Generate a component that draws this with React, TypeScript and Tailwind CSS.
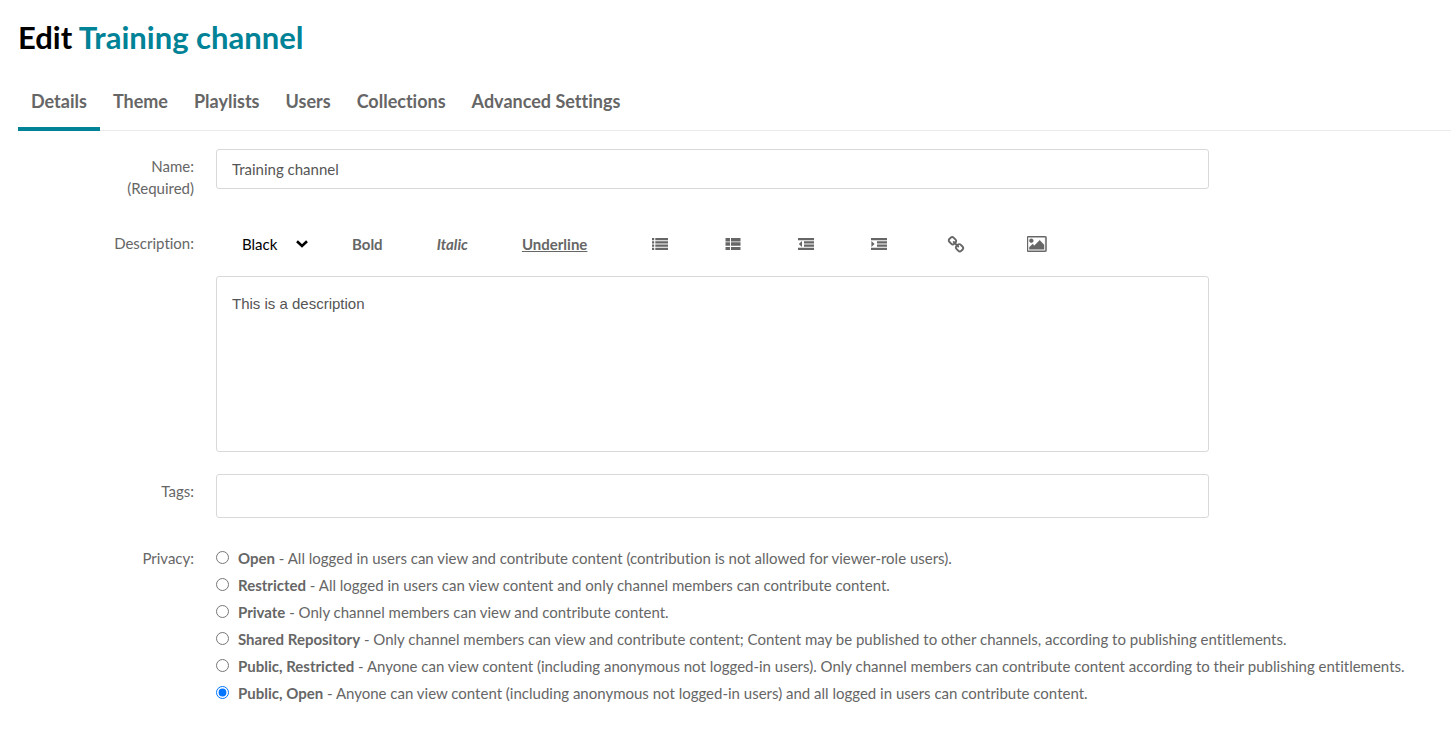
import { useState, type ReactNode } from "react";

const tabs = ["Details", "Theme", "Playlists", "Users", "Collections", "Advanced Settings"];

const privacyOptions = [
  { name: "Open", text: "All logged in users can view and contribute content (contribution is not allowed for viewer-role users)." },
  { name: "Restricted", text: "All logged in users can view content and only channel members can contribute content." },
  { name: "Private", text: "Only channel members can view and contribute content." },
  { name: "Shared Repository", text: "Only channel members can view and contribute content; Content may be published to other channels, according to publishing entitlements." },
  { name: "Public, Restricted", text: "Anyone can view content (including anonymous not logged-in users). Only channel members can contribute content according to their publishing entitlements." },
  { name: "Public, Open", text: "Anyone can view content (including anonymous not logged-in users) and all logged in users can contribute content." },
];

function ListIcon() {
  return (
    <svg viewBox="0 0 16 12" className="h-3 w-4" fill="currentColor" aria-hidden="true">
      <path d="M0 0h2.200v2.300H0zM3.300 0H16v2.300H3.300zM0 3.200h2.200v2.300H0zM3.300 3.200H16v2.300H3.300zM0 6.400h2.200v2.300H0zM3.300 6.400H16v2.300H3.300zM0 9.700h2.200V12H0zM3.300 9.700H16V12H3.300z" />
    </svg>
  );
}

function ThListIcon() {
  return (
    <svg viewBox="0 0 16 12" className="h-3 w-4" fill="currentColor" aria-hidden="true">
      <path d="M.5 0h4.500v3.400H.5zM6 0h9.500v3.400H6zM.5 4.300h4.500v3.400H.5zM6 4.300h9.500v3.400H6zM.5 8.900h4.500V12H.5zM6 8.900h9.500V12H6z" />
    </svg>
  );
}

function OutdentIcon() {
  return (
    <svg viewBox="0 0 16 12" className="h-3 w-4" fill="currentColor" aria-hidden="true">
      <path d="M0 0h16v2.300H0zM6 3.200h10v2.300H6zM6 6.400h10v2.300H6zM0 9.700h16V12H0zM4 3v6L.8 6z" />
    </svg>
  );
}

function IndentIcon() {
  return (
    <svg viewBox="0 0 16 12" className="h-3 w-4" fill="currentColor" aria-hidden="true">
      <path d="M0 0h16v2.300H0zM6 3.200h10v2.300H6zM6 6.400h10v2.300H6zM0 9.700h16V12H0zM.4 3v6l3.200-3z" />
    </svg>
  );
}

function LinkIcon() {
  return (
    <svg viewBox="0 -90 1792 1792" className="size-[18px]" fill="currentColor" aria-hidden="true">
      <path d="M1520 1216q0-40-28-68l-208-208q-28-28-68-28-42 0-72 32 3 3 19 18.500t21.500 21.500 15 19 13 25.500 3.500 27.500q0 40-28 68t-68 28q-15 0-27.500-3.500t-25.500-13-19-15-21.500-21.500-18.500-19q-33 31-33 73 0 40 28 68l206 207q27 27 68 27 40 0 68-26l147-146q28-28 28-67zm-703-705q0-40-28-68l-206-207q-28-28-68-28-39 0-68 27l-147 146q-28 28-28 67 0 40 28 68l208 208q27 27 68 27 42 0 72-31-3-3-19-18.500t-21.500-21.500-15-19-13-25.500-3.500-27.500q0-40 28-68t68-28q15 0 27.500 3.500t25.500 13 19 15 21.500 21.500 18.500 19q33-31 33-73zm895 705q0 120-85 203l-147 146q-83 83-203 83-121 0-204-85l-206-207q-83-83-83-203 0-123 88-209l-88-88q-86 88-208 88-120 0-204-84l-208-208q-84-84-84-204t85-203l147-146q83-83 203-83 121 0 204 85l206 207q83 83 83 203 0 123-88 209l88 88q86-88 208-88 120 0 204 84l208 208q84 84 84 204z" />
    </svg>
  );
}

function ImageIcon() {
  return (
    <svg viewBox="-32 128 1920 1536" className="h-4 w-5" fill="currentColor" stroke="currentColor" strokeWidth="36" aria-hidden="true">
      <path d="M576 576q0 80-56 136t-136 56-136-56-56-136 56-136 136-56 136 56 56 136zm1024 384v448h-1408v-192l320-320 160 160 512-512zm96-704h-1600q-13 0-22.500 9.500t-9.500 22.500v1216q0 13 9.500 22.500t22.500 9.500h1600q13 0 22.500-9.500t9.500-22.500v-1216q0-13-9.500-22.500t-22.500-9.500zm160 32v1216q0 66-47 113t-113 47h-1600q-66 0-113-47t-47-113v-1216q0-66 47-113t113-47h1600q66 0 113 47t47 113z" />
    </svg>
  );
}

const iconButtons = [
  { label: "Bulleted list", width: "w-5", icon: <ListIcon /> },
  { label: "Numbered list", width: "w-5", icon: <ThListIcon /> },
  { label: "Outdent", width: "w-5", icon: <OutdentIcon /> },
  { label: "Indent", width: "w-5", icon: <IndentIcon /> },
  { label: "Insert link", width: "w-7", icon: <LinkIcon /> },
  { label: "Insert image", width: "w-7", icon: <ImageIcon /> },
];

function Row({ label, children }: { label: ReactNode; children: ReactNode }) {
  return (
    <div className="flex gap-[22px]">
      <div className="w-44 shrink-0 text-right">{label}</div>
      <div className="min-w-0 flex-1">{children}</div>
    </div>
  );
}

export default function App() {
  const [tab, setTab] = useState("Details");
  const [privacy, setPrivacy] = useState("Public, Open");
  const [name, setName] = useState("Training channel");
  const [description, setDescription] = useState("This is a description");

  return (
    <main className="min-h-screen bg-white pl-[18px] font-['Lato',sans-serif] text-[15px] leading-[22px] text-[#666] [font-variant-ligatures:none]">
      <h1 className="pt-[17px] text-[31px] leading-10 font-bold text-black">
        Edit <span className="text-[#008297]">Training channel</span>
      </h1>

      <nav className="mt-4 flex border-b border-[#ebebeb]">
        {tabs.map((t) => (
          <a
            key={t}
            href="#"
            onClick={(e) => {
              e.preventDefault();
              setTab(t);
            }}
            className={
              "-mb-px border-b-4 px-[13px] pt-4 pb-[14px] text-[18px] leading-6 font-bold " +
              (t === tab ? "border-[#008297]" : "border-transparent")
            }
          >
            {t}
          </a>
        ))}
      </nav>

      <form className="pt-[18px]">
        <Row
          label={
            <label htmlFor="name" className="block pt-1.5">
              Name:
              <br />
              (Required)
            </label>
          }
        >
          <div className="pr-[242px]">
            <input
              id="name"
              type="text"
              value={name}
              onChange={(e) => setName(e.target.value)}
              className="block h-10 w-full rounded-[3px] border border-[#d9d9d9] px-[15px] text-[#555]"
            />
          </div>
        </Row>

        <div className="pt-[25px]">
          <Row
            label={
              <label htmlFor="description" className="block pt-2">
                Description:
              </label>
            }
          >
            <div className="flex h-10 items-center gap-[54px] pl-[26px] font-bold">
              <div className="relative -mr-[10px] flex items-center">
                <select
                  aria-label="Text colour"
                  className="w-[66px] appearance-none bg-transparent font-normal text-black"
                >
                  <option>Black</option>
                </select>
                <svg
                  viewBox="0 0 12 8"
                  className="pointer-events-none absolute right-0 h-2 w-3"
                  fill="none"
                  stroke="black"
                  strokeWidth="2.600"
                  aria-hidden="true"
                >
                  <path d="M1 1.300 6 6l5-4.700" />
                </svg>
              </div>
              <button type="button">Bold</button>
              <button type="button" className="italic">Italic</button>
              <button type="button" className="underline">Underline</button>
              <div className="flex items-center gap-[53px] pl-[9px]">
                {iconButtons.map((b) => (
                  <button key={b.label} type="button" aria-label={b.label} className={"flex h-5 items-center justify-center " + b.width}>
                    {b.icon}
                  </button>
                ))}
              </div>
            </div>
            <div className="pt-3 pr-[242px]">
              <textarea
                id="description"
                value={description}
                onChange={(e) => setDescription(e.target.value)}
                className="block h-44 w-full resize-none rounded-[3px] border border-[#d9d9d9] px-[15px] py-4 font-['Liberation_Sans',sans-serif] text-[#555]"
              />
            </div>
          </Row>
        </div>

        <div className="pt-[22px]">
          <Row
            label={
              <label htmlFor="tags" className="block pt-1.5">
                Tags:
              </label>
            }
          >
            <div className="pr-[242px]">
              <input id="tags" type="text" className="block h-11 w-full rounded-[3px] border border-[#d9d9d9] px-[15px] text-[#555]" />
            </div>
          </Row>
        </div>

        <div className="pt-[29px]">
          <Row label={<span id="privacy">Privacy:</span>}>
            <div role="radiogroup" aria-labelledby="privacy" className="flex flex-col gap-[5px]">
              {privacyOptions.map((o) => (
                <label key={o.name} className="flex items-start gap-[9px]">
                  <input
                    type="radio"
                    name="privacy"
                    checked={privacy === o.name}
                    onChange={() => setPrivacy(o.name)}
                    className="mt-1 size-[13px] shrink-0"
                  />
                  <span>
                    <b className="font-bold">{o.name}</b> - {o.text}
                  </span>
                </label>
              ))}
            </div>
          </Row>
        </div>
      </form>
    </main>
  );
}
